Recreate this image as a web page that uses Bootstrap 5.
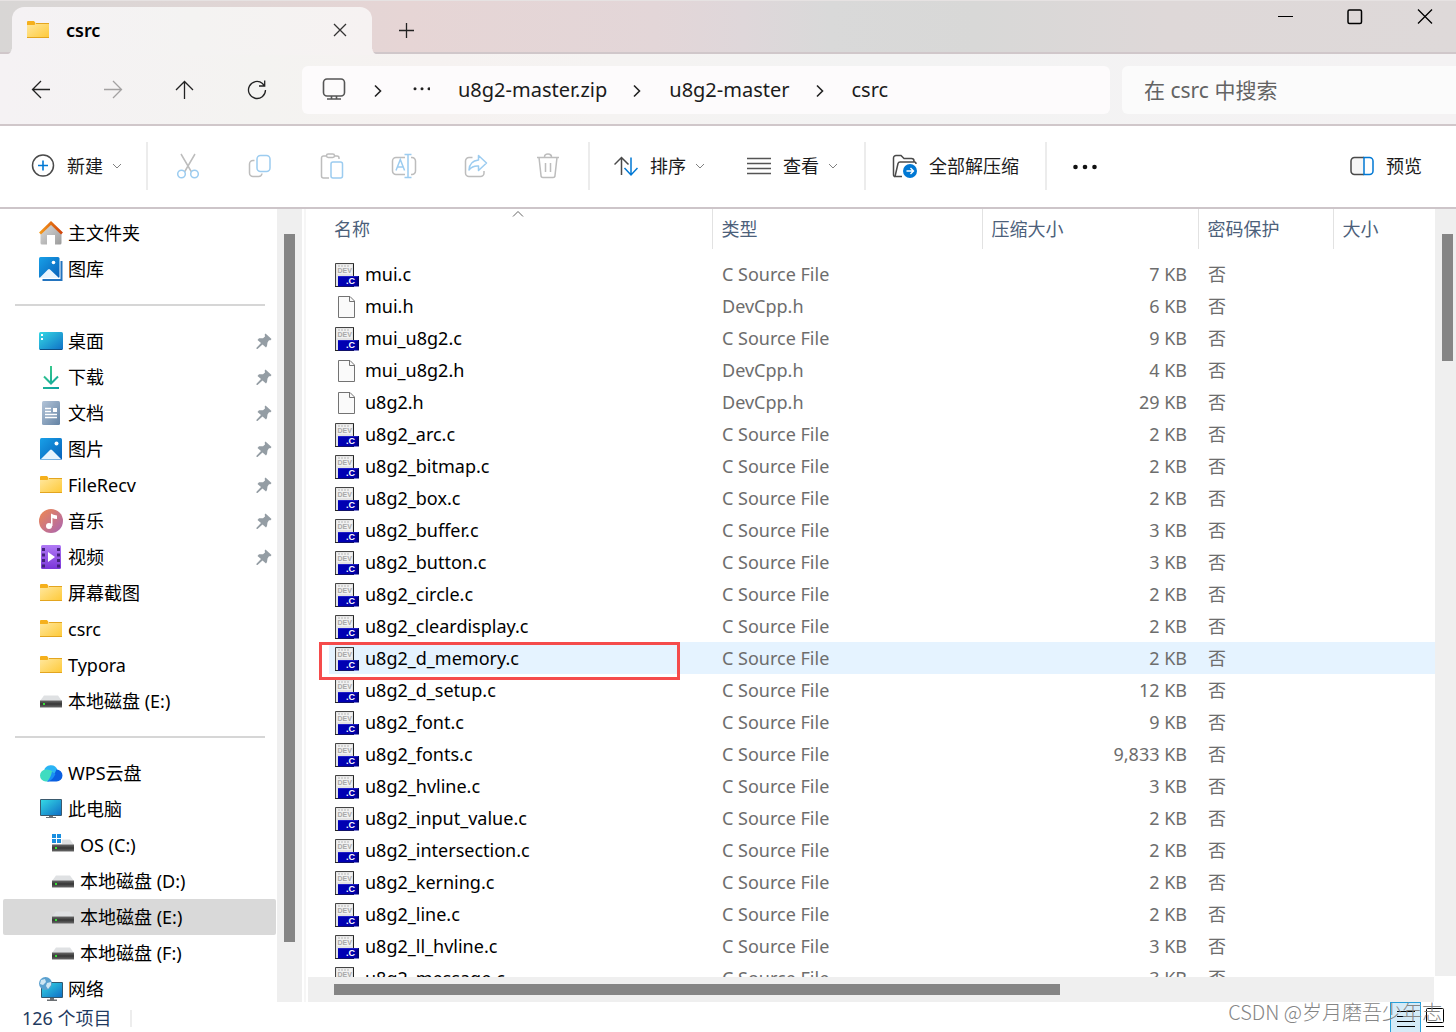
<!DOCTYPE html>
<html lang="zh-CN">
<head>
<meta charset="utf-8">
<meta name="viewport" content="width=device-width, initial-scale=1">
<title>csrc</title>
<link href="https://cdn.jsdelivr.net/npm/bootstrap@5.3.0/dist/css/bootstrap.min.css" rel="stylesheet">
<style>
  body { font-family: "Noto Sans", "Noto Sans CJK SC", sans-serif; font-size: 18px; line-height: 32px; color: #000; background: #fff; }
  svg { flex: none; display: block; }
  .win { height: 100vh; overflow: hidden; }
  .plain { border: 0; background: none; padding: 0; color: #1b1b1b; display: flex; align-items: center; }

  /* title strip */
  .strip { height: 54px; padding-left: 12px; border-top: 1px solid #e6e2e2; border-bottom: 2px solid #d0c7ca;
    background: linear-gradient(90deg, #d8d6d5 0, #e6d5d5 28%, #e3d6d8 45%, #dfd7da 51%, #d9d9d9 57%, #d8d8d7 67%, #ded8d8 80%, #ded9d9 100%); }
  .tab-on { width: 360px; height: 48px; margin-top: 6px; padding: 0 25px 2px 14px; border-radius: 12px 12px 0 0; position: relative;
    background: linear-gradient(90deg, #f5f2f4, #f4f3f2 50%, #f6f2f2); }
  .tab-on::before, .tab-on::after { content: ""; position: absolute; bottom: 0; width: 6px; height: 6px; }
  .tab-on::before { right: 100%; background: radial-gradient(circle at 0 0, transparent 5px, #f5f2f4 6px); }
  .tab-on::after { left: 100%; background: radial-gradient(circle at 100% 0, transparent 5px, #f6f2f2 6px); }
  .wbtn { width: 62px; height: 32px; justify-content: center; }
  .addtab { width: 68px; height: 100%; padding-top: 6px; }

  /* address row */
  .navrow { height: 72px; border-bottom: 2px solid #d0c7ca; padding: 2px 0 0 5px; background: linear-gradient(90deg, #f5f2f4 0, #f4f3f1 18%, #f6f2f1 30%, #f5f3f2 42%, #f3f3f3 60%, #f4f2f3 100%); }
  .nbtn { width: 72px; height: 48px; justify-content: center; }
  .addr, .find { height: 48px; background: #fdfbfc; font-size: 20px; }
  .addr { flex: 1 1 0; margin-left: 9px; border-radius: 6px; padding-left: 20px; }
  .addr a { color: #1b1b1b; text-decoration: none; }
  .crumb { margin: 2px 27px 0 25px; }
  .find { width: 334px; margin-left: 12px; border: 0; border-radius: 6px 0 0 6px; padding: 0 22px; background: #fbfbfb; font-size: 21px; }
  .find::placeholder { color: #636363; opacity: 1; }

  /* command bar */
  .cmd { height: 84px; border-bottom: 2px solid #cdc5c9; padding: 0 34px 0 31px; }
  .cmd .sep { width: 2px; height: 48px; background: #ececec; }
  .cmd .wide { margin: 0 26px; }
  .ibtn { width: 72px; height: 48px; justify-content: center; }
  .tgap { gap: 9px; }
  .tgap svg:first-child { margin-right: 3px; }
  .viewbtn { margin-left: 42px; }

  /* side tree */
  .tree { width: 277px; padding: 6px 1px 0 3px; overflow: hidden; }
  .tree a { height: 36px; padding-left: 36px; gap: 5px; color: #000; text-decoration: none; border-radius: 2px; }
  .tree a.sub { padding-left: 48px; }
  .tree a.here { background: #d9d9d9; }
  .tree .pin { margin-left: auto; margin-right: 4px; }
  .rule { height: 36px; padding: 17px 11px 0 12px; }
  .rule div { height: 2px; background: #d6d6d6; }

  /* scroll bars */
  .vbar { background: #efefef; }
  .vbar div { width: 11px; background: #858585; }
  .vleft { width: 25px; padding: 25px 0 60px 7px; }
  .vright { width: 21px; padding: 25px 0 0 7px; margin-bottom: 26px; }
  .vright div { height: 127px; }
  .hbar { height: 25px; margin: 0 1px 0 2px; padding: 7px 0 0 26px; background: #efefef; }
  .hbar div { height: 11px; width: 66%; background: #858585; }

  /* file list */
  .pane { border-left: 2px solid #f6f6f6; margin-left: 2px; }
  .listbox { padding-left: 23px; overflow: hidden; flex: 1 1 0; min-height: 0; }
  .files { table-layout: fixed; width: 100%; line-height: 32px; }
  .files th { height: 40px; padding: 0 0 0 9px; font-weight: 400; color: #4c607a; border-left: 1px solid #e2e2e2; position: relative; }
  .files th:first-child { border-left: 0; padding-left: 5px; }
  .files th svg { position: absolute; left: 50%; top: 1px; margin-left: -8px; }
  .files tbody::before { content: ""; display: block; height: 9px; }
  .files td { height: 32px; padding: 0 0 0 10px; color: #6d6d6d; white-space: nowrap; }
  .files td:first-child { padding-left: 6px; color: #000; position: relative; }
  .files td:nth-child(3) { text-align: right; padding-right: 11px; }
  .files td svg { display: inline-block; vertical-align: middle; margin-right: 6px; margin-top: -3px; }
  .files .hot td { background: #e5f3ff; }
  .redbox { position: absolute; left: -10px; top: 0; width: 361px; height: 38px; border: 3px solid #f54b4b; z-index: 2; }

  /* status line */
  .stat { height: 30px; padding: 2px 11px 0 22px; color: #1f3a5f; position: relative; overflow: hidden; }
  .stat .bar { width: 2px; height: 17px; margin-left: 18px; background: #ededed; }
  .von { width: 31px; height: 32px; border: 1px solid #26a0da; background: #d5ebf7; justify-content: center; }
  .wm { position: absolute; right: 14px; top: -6px; font-family: "Noto Sans CJK SC", sans-serif; font-weight: 300; font-size: 20px; color: #858585; }
</style>
</head>
<body>
<svg width="0" height="0" class="position-absolute" aria-hidden="true">
  <defs>
    <linearGradient id="gF" x1="0" y1="0" x2="1" y2="1"><stop offset="0" stop-color="#ffe8a0"/><stop offset="1" stop-color="#fec937"/></linearGradient>
    <linearGradient id="gB" x1="0" y1="0" x2="1" y2="1"><stop offset="0" stop-color="#18a0e8"/><stop offset="1" stop-color="#0860b8"/></linearGradient>
    <linearGradient id="gT" x1="0" y1="0" x2="1" y2="1"><stop offset="0" stop-color="#34d8e4"/><stop offset="1" stop-color="#0f6fc6"/></linearGradient>
    <linearGradient id="gO" x1="0" y1="0" x2="1" y2="0"><stop offset="0" stop-color="#f59a1b"/><stop offset="1" stop-color="#d0440c"/></linearGradient>
    <linearGradient id="gH" x1="0" y1="0" x2="1" y2="1"><stop offset="0" stop-color="#dedede"/><stop offset="1" stop-color="#9b9b9b"/></linearGradient>
    <linearGradient id="gM" x1="0" y1="0" x2="1" y2="1"><stop offset="0" stop-color="#f0894f"/><stop offset="1" stop-color="#a964b4"/></linearGradient>
    <linearGradient id="gV" x1="0" y1="0" x2="0" y2="1"><stop offset="0" stop-color="#b07af5"/><stop offset="1" stop-color="#7a35d8"/></linearGradient>
    <linearGradient id="gD" x1="0" y1="0" x2="1" y2="1"><stop offset="0" stop-color="#b3c4d8"/><stop offset="1" stop-color="#6483a4"/></linearGradient>
    <linearGradient id="gK" x1="0" y1="0" x2="0" y2="1"><stop offset="0" stop-color="#6a6a6a"/><stop offset=".5" stop-color="#363636"/><stop offset="1" stop-color="#6a6a6a"/></linearGradient>
    <linearGradient id="gG" gradientUnits="userSpaceOnUse" x1="4" y1="1" x2="20" y2="23"><stop offset="0" stop-color="#3fd088"/><stop offset="1" stop-color="#0aa0a0"/></linearGradient>
    <linearGradient id="gC" x1="0" y1="0" x2="1" y2="0"><stop offset="0" stop-color="#0000b8"/><stop offset=".85" stop-color="#0000a8"/><stop offset="1" stop-color="#000060"/></linearGradient>
    <symbol id="folder" viewBox="0 0 24 24"><path d="M1 5.500V4Q1 3 2 3h6l1.500 2v2.500H1z" fill="#f5b01c"/><path d="M1 7h7.500L10 5h13v15H1z" fill="url(#gF)"/><path d="M10 5.500h13M1 19.500h22" fill="none" stroke="#e3a51f"/></symbol>
    <symbol id="disk" viewBox="0 0 24 24"><path d="M1 12l4-5.500h14l4 5.500z" fill="#dfe1e3"/><path d="M1 11.500h22v7H1z" fill="url(#gK)"/><path d="M4 14h2v2H4z" fill="#35e035"/></symbol>
    <symbol id="pin" viewBox="0 0 16 16"><path d="M9.500.5l6 5.500-1 1.200-1.500 0-1.500 2.300-.5 3.500-1 1.500L6.500 11.500 1.500 16H.5v-1.200l4.500-4.800L1.500 7l1.500-1.800 4 0L9 3.500l-.3-2z" fill="#949da4"/></symbol>
    <symbol id="cfile" viewBox="0 0 24 24"><path d="M0 0h19v24H0z" fill="#e4e4e4"/><path d="M2 2h15v9H2z" fill="#f1f1f1"/><path d="M.5 24V.5H19" fill="none" stroke="#444"/><path d="M18.500 1v12M0 23.500h19" stroke="#222"/><path d="M3 3h11" stroke="#b5b5b5" stroke-dasharray="2 1"/><text x="2.500" y="9.500" font-family="Liberation Sans, sans-serif" font-size="7" font-weight="700" fill="#a8a8a8">DEV</text><path d="M3 13h21v10.500H3z" fill="url(#gC)"/><path d="M3 13.500h20" stroke="#2020c8"/><text x="11" y="21" font-family="Liberation Sans, sans-serif" font-weight="700" font-size="9" fill="#fff">.C</text></symbol>
    <symbol id="hfile" viewBox="0 0 24 24"><path d="M3.500 1.500h11.500l4.500 4.500v16.500h-16z" fill="#fafafa" stroke="#737373"/><path d="M14.500 1.500v5h5" fill="none" stroke="#737373"/></symbol>
    <symbol id="down" viewBox="0 0 10 10"><path d="M1 3l4 4 4-4" fill="none" stroke="#808080"/></symbol>
    <symbol id="next" viewBox="0 0 10 14"><path d="M2 1.500L7.500 7 2 12.500" fill="none" stroke="#222" stroke-width="1.600"/></symbol>
    <symbol id="photo" viewBox="0 0 24 24"><rect x="1" y="1" width="22" height="22" rx="1.500" fill="url(#gB)"/><path d="M1.500 22.500L11 13q1-1 2 0l9.500 9.500z" fill="#e8f4fd"/><circle cx="17.500" cy="6.500" r="2" fill="#fff"/></symbol>
  </defs>
</svg>

<div class="win d-flex flex-column">
  <header class="strip d-flex">
    <div class="tab-on d-flex align-items-center">
      <svg width="24" height="24"><use href="#folder"/></svg>
      <span class="fw-semibold ms-3 flex-grow-1">csrc</span>
      <button class="plain" aria-label="关闭标签页"><svg width="14" height="14" viewBox="0 0 14 14"><path d="M1 1l12 12M13 1L1 13" stroke="#333" stroke-width="1.300"/></svg></button>
    </div>
    <button class="plain addtab justify-content-center" aria-label="新标签页"><svg width="16" height="16" viewBox="0 0 16 16"><path d="M8.500 1v15M1 8.500h15" stroke="#222" stroke-width="1.300"/></svg></button>
    <div class="ms-auto d-flex gap-2">
      <button class="plain wbtn" aria-label="最小化"><svg width="16" height="16" viewBox="0 0 16 16"><path d="M1 7.500h15" stroke="#000"/></svg></button>
      <button class="plain wbtn" aria-label="最大化"><svg width="16" height="16" viewBox="0 0 16 16"><rect x="1" y="1" width="13.500" height="13.500" rx="1.500" fill="none" stroke="#000" stroke-width="1.500"/></svg></button>
      <button class="plain wbtn" aria-label="关闭"><svg width="16" height="16" viewBox="0 0 16 16"><path d="M1 .5l14 14M15 .5L1 14.500" stroke="#000" stroke-width="1.300"/></svg></button>
    </div>
  </header>

  <nav class="navrow d-flex align-items-center">
    <button class="plain nbtn" aria-label="后退"><svg width="20" height="20" viewBox="0 0 20 20" fill="none" stroke="#222" stroke-width="1.300"><path d="M19 9.500H1.500M10 1L1.500 9.500l8.500 8.500"/></svg></button>
    <button class="plain nbtn" aria-label="前进"><svg width="20" height="20" viewBox="0 0 20 20" fill="none" stroke="#a3a1a1" stroke-width="1.300"><path d="M1 9.500h17.500M10 1l8.500 8.500-8.500 8.500"/></svg></button>
    <button class="plain nbtn" aria-label="向上"><svg width="20" height="20" viewBox="0 0 20 20" fill="none" stroke="#222" stroke-width="1.300"><path d="M9.500 19V1.500M1 10l8.500-8.500 8.500 8.500"/></svg></button>
    <button class="plain nbtn" aria-label="刷新"><svg width="20" height="20" viewBox="0 0 20 20" fill="none" stroke="#222" stroke-width="1.300"><path d="M18.500 10A8.500 8.500 0 1 1 15.500 3.500L17.500 6M17.700.5V6H12"/></svg></button>
    <div class="addr d-flex align-items-center">
      <svg width="24" height="24" viewBox="0 0 24 24" fill="none" stroke="#555" stroke-width="1.600"><rect x="1.500" y="1" width="21" height="17" rx="3.500"/><path d="M9.500 18V21M14.500 18V21M5 21h14"/></svg>
      <svg class="crumb" width="14" height="14"><use href="#next" width="14" height="14"/></svg>
      <svg width="18" height="6" viewBox="0 0 18 6" fill="#222"><circle cx="3" cy="1.800" r="1.500"/><circle cx="10" cy="1.800" r="1.500"/><circle cx="17" cy="1.800" r="1.500"/></svg>
      <a href="#" class="ms-4 ps-1">u8g2-master.zip</a>
      <svg class="crumb" width="10" height="14"><use href="#next"/></svg>
      <a href="#">u8g2-master</a>
      <svg class="crumb" width="10" height="14"><use href="#next"/></svg>
      <a href="#">csrc</a>
    </div>
    <input class="find" type="search" aria-label="搜索" placeholder="在 csrc 中搜索">
  </nav>

  <div class="cmd d-flex align-items-center">
    <button class="plain tgap"><svg width="24" height="24" viewBox="0 0 24 24" fill="none"><circle cx="12" cy="11.500" r="10.500" stroke="#4a4a4a" stroke-width="1.500"/><path d="M12 6.500v10M7 11.500h10" stroke="#0078d4" stroke-width="1.600"/></svg>新建<svg width="10" height="10"><use href="#down"/></svg></button>
    <div class="sep ms-4 me-1"></div>
    <button class="plain ibtn" aria-label="剪切"><svg width="24" height="26" viewBox="0 0 24 26" fill="none" stroke-width="1.500"><path d="M5 1l10.500 18M19 1L8.500 19" stroke="#bdbdbd"/><circle cx="5.500" cy="21" r="3.800" stroke="#9cccf0"/><circle cx="18.500" cy="21" r="3.800" stroke="#9cccf0"/></svg></button>
    <button class="plain ibtn" aria-label="复制"><svg width="24" height="24" viewBox="0 0 24 24" fill="none" stroke-width="1.500"><path d="M6.500 6.500H5A3.500 3.500 0 0 0 1.500 10v9A3.500 3.500 0 0 0 5 22.500h5.500a3.500 3.500 0 0 0 3.500-3" stroke="#bdbdbd"/><rect x="9" y="1.500" width="13" height="16" rx="3.500" stroke="#9cccf0"/></svg></button>
    <button class="plain ibtn" aria-label="粘贴"><svg width="24" height="26" viewBox="0 0 24 26" fill="none" stroke-width="1.500"><path d="M6 3H3.500A2 2 0 0 0 1.500 5v18a2 2 0 0 0 2 2H9M14.500 3H17a2 2 0 0 1 2 2v1" stroke="#bdbdbd"/><rect x="6.500" y="1" width="8" height="3.500" rx="1.700" stroke="#bdbdbd"/><rect x="11" y="9" width="11.500" height="16" rx="2" stroke="#9cccf0"/></svg></button>
    <button class="plain ibtn" aria-label="重命名"><svg width="26" height="26" viewBox="0 0 26 26" fill="none" stroke-width="1.500"><path d="M14 4.500H5A3.500 3.500 0 0 0 1.500 8v10A3.500 3.500 0 0 0 5 21.500h9M20 4.500h1A3.500 3.500 0 0 1 24.500 8v10a3.500 3.500 0 0 1-3.500 3.500h-1" stroke="#bdbdbd"/><path d="M17 1.500v23M13.500 1.500h7M13.500 24.500h7M5 17.500l4.300-11 4.300 11M6.500 14h5.500" stroke="#9cccf0"/></svg></button>
    <button class="plain ibtn" aria-label="共享"><svg width="24" height="24" viewBox="0 0 24 24" fill="none" stroke-width="1.500" stroke-linejoin="round"><path d="M8.500 3.500H5A3.500 3.500 0 0 0 1.500 7v12A3.500 3.500 0 0 0 5 22.500h11.500A3.500 3.500 0 0 0 20 19v-2" stroke="#bdbdbd"/><path d="M14.500 1.500l8 7.500-8 7.500v-4.500q-6-.5-9.500 4Q5.500 7 14.500 6z" stroke="#9cccf0"/></svg></button>
    <button class="plain ibtn" aria-label="删除"><svg width="24" height="26" viewBox="0 0 24 26" fill="none" stroke="#bdbdbd" stroke-width="1.500"><path d="M1 4.500h22M8.500 4a3.500 3 0 0 1 7 0M3 4.500l2 18a2 2 0 0 0 2 2h10a2 2 0 0 0 2-2l2-18M9.500 10v9M14.500 10v9"/></svg></button>
    <div class="sep ms-1 me-4"></div>
    <button class="plain tgap"><svg width="24" height="24" viewBox="0 0 24 24" fill="none" stroke-width="1.500"><path d="M7.500 21V3.500M.5 10.500l7-7 7 7" stroke="#4a4a4a"/><path d="M17 3.500V21M10.500 14l6.500 7 6.500-7" stroke="#0078d4"/></svg>排序<svg width="10" height="10"><use href="#down"/></svg></button>
    <button class="plain tgap viewbtn"><svg width="24" height="24" viewBox="0 0 24 24"><path d="M0 4.500h24M0 9.500h24M0 14.500h24M0 19.500h24" stroke="#555" stroke-width="1.300"/></svg>查看<svg width="10" height="10"><use href="#down"/></svg></button>
    <div class="sep wide"></div>
    <button class="plain tgap"><svg width="25" height="24" viewBox="0 0 25 24" fill="none"><path d="M3 22.500q-1.500 0-1.500-2V4a2.500 2.500 0 0 1 2.500-2.500h5l3 3h7.500A2.500 2.500 0 0 1 22 7v1" stroke="#4a4a4a" stroke-width="1.500"/><path d="M10 22.500H3L6 9.500Q6.500 8 8 8h14.500q1.500 0 1.500 2" stroke="#4a4a4a" stroke-width="1.500"/><circle cx="18" cy="17" r="7" fill="#0078d4"/><path d="M14.500 17h7M18.500 14l3 3-3 3" stroke="#fff" stroke-width="1.400"/></svg>全部解压缩</button>
    <div class="sep wide"></div>
    <button class="plain" aria-label="更多"><svg width="26" height="8" viewBox="0 0 26 8" fill="#111"><circle cx="2.500" cy="5" r="2.300"/><circle cx="12" cy="5" r="2.300"/><circle cx="21.500" cy="5" r="2.300"/></svg></button>
    <button class="plain tgap ms-auto"><svg width="24" height="24" viewBox="0 0 24 24" fill="none" stroke-width="1.500"><path d="M14 3.500H4.500a3.500 3.500 0 0 0-3.500 3.500v10a3.500 3.500 0 0 0 3.500 3.500H14" fill="#f6f6f6" stroke="#4a4a4a"/><path d="M14 3.500h5.500A3.500 3.500 0 0 1 23 7v10a3.500 3.500 0 0 1-3.500 3.500H14z" stroke="#0078d4"/></svg>预览</button>
  </div>

  <main class="d-flex flex-grow-1 overflow-hidden">
    <nav class="tree flex-shrink-0">
      <a href="#" class="d-flex align-items-center"><svg width="24" height="24" viewBox="0 0 24 24"><path d="M1.500 11L12 2l10.500 9v11q0 1.500-1.500 1.500h-5V14H8v9.500H3q-1.500 0-1.500-1.500z" fill="url(#gH)"/><path d="M1 12.500L12 2l11 10.500" fill="none" stroke="url(#gO)" stroke-width="2.800"/></svg>主文件夹</a>
      <a href="#" class="d-flex align-items-center"><svg width="24" height="24" viewBox="0 0 24 24"><path d="M22.500 4v19H3.500" fill="none" stroke="#2374bf" stroke-width="2"/><rect x="0" y="0" width="20.500" height="21" rx="1.500" fill="url(#gB)"/><path d="M.5 21l8.500-8.500q1-1 2 0l9 8.500z" fill="#e8f4fd"/><circle cx="14.500" cy="5.500" r="1.800" fill="#fff"/></svg>图库</a>
      <div class="rule"><div></div></div>
      <a href="#" class="d-flex align-items-center"><svg width="24" height="24" viewBox="0 0 24 24"><rect y="3" width="24" height="18" rx="1.500" fill="url(#gT)"/><path d="M1 20.500h22" stroke="#0d4f86"/><path d="M2 5h2v2H2zM2 9h2v2H2z" fill="#fff"/></svg>桌面<svg class="pin" width="16" height="16"><use href="#pin"/></svg></a>
      <a href="#" class="d-flex align-items-center"><svg width="24" height="24" viewBox="0 0 24 24"><path d="M12 1v17M5 11.500l7 7 7-7M4 23h16" fill="none" stroke="url(#gG)" stroke-width="2"/></svg>下载<svg class="pin" width="16" height="16"><use href="#pin"/></svg></a>
      <a href="#" class="d-flex align-items-center"><svg width="24" height="24" viewBox="0 0 24 24"><rect x="3" width="18" height="24" rx="1.500" fill="url(#gD)"/><path d="M6 7.500h6M6 10.500h6M6 13.500h12M6 16.500h12" stroke="#fff" stroke-width="1.300"/><path d="M14 7h4v4h-4z" fill="#fff"/></svg>文档<svg class="pin" width="16" height="16"><use href="#pin"/></svg></a>
      <a href="#" class="d-flex align-items-center"><svg width="24" height="24"><use href="#photo"/></svg>图片<svg class="pin" width="16" height="16"><use href="#pin"/></svg></a>
      <a href="#" class="d-flex align-items-center"><svg width="24" height="24"><use href="#folder"/></svg>FileRecv<svg class="pin" width="16" height="16"><use href="#pin"/></svg></a>
      <a href="#" class="d-flex align-items-center"><svg width="24" height="24" viewBox="0 0 24 24"><circle cx="12" cy="12" r="12" fill="url(#gM)"/><circle cx="10" cy="17" r="3" fill="#fff"/><path d="M12 17V4.500q2 1.500 6 2V10q-3 0-4.500-1v8z" fill="#fff"/></svg>音乐<svg class="pin" width="16" height="16"><use href="#pin"/></svg></a>
      <a href="#" class="d-flex align-items-center"><svg width="24" height="24" viewBox="0 0 24 24"><rect x="2" width="20" height="24" rx="1.500" fill="url(#gV)"/><path d="M4.500 3v20M19.500 3v20" stroke="#43217c" stroke-width="3" stroke-dasharray="3 2.500"/><path d="M9 7l7 5-7 5z" fill="#fff"/></svg>视频<svg class="pin" width="16" height="16"><use href="#pin"/></svg></a>
      <a href="#" class="d-flex align-items-center"><svg width="24" height="24"><use href="#folder"/></svg>屏幕截图</a>
      <a href="#" class="d-flex align-items-center"><svg width="24" height="24"><use href="#folder"/></svg>csrc</a>
      <a href="#" class="d-flex align-items-center"><svg width="24" height="24"><use href="#folder"/></svg>Typora</a>
      <a href="#" class="d-flex align-items-center"><svg width="24" height="24"><use href="#disk"/></svg>本地磁盘 (E:)</a>
      <div class="rule"><div></div></div>
      <a href="#" class="d-flex align-items-center"><svg width="24" height="24" viewBox="0 0 24 24"><path d="M5 10a7 7 0 0 1 13.500-1l-5 8z" fill="#2ab4f5"/><path d="M17.500 8.500a6 6 0 0 1 0 12H8Q14 17 17.500 8.500z" fill="#0a5fe0"/><path d="M7 8.500q4-.5 8 3-3 6-7 9H7a6 6 0 0 1 0-12z" fill="#3fdcc0"/><path d="M13 10.500l3.500 2.500q-2.500 5.500-7 7.500H8q4-4 5-10z" fill="#1a90f5"/></svg>WPS云盘</a>
      <a href="#" class="d-flex align-items-center"><svg width="24" height="24" viewBox="0 0 24 24"><rect x="1" y="2" width="22" height="17" rx="1" fill="#3a5a6e"/><rect x="2" y="3" width="20" height="15" fill="url(#gT)"/><path d="M10 19h4v1h3v1H7v-1h3z" fill="#6b6f73"/></svg>此电脑</a>
      <a href="#" class="sub d-flex align-items-center"><svg width="24" height="24" viewBox="0 0 24 24"><use href="#disk"/><path d="M0 0h11v11H0z" fill="#fff"/><path d="M1 1h4v4H1zM6 1h4v4H6zM1 6h4v4H1zM6 6h4v4H6z" fill="#1a8fe0"/></svg>OS (C:)</a>
      <a href="#" class="sub d-flex align-items-center"><svg width="24" height="24"><use href="#disk"/></svg>本地磁盘 (D:)</a>
      <a href="#" class="sub here d-flex align-items-center"><svg width="24" height="24"><use href="#disk"/></svg>本地磁盘 (E:)</a>
      <a href="#" class="sub d-flex align-items-center"><svg width="24" height="24"><use href="#disk"/></svg>本地磁盘 (F:)</a>
      <a href="#" class="d-flex align-items-center"><svg width="24" height="24" viewBox="0 0 24 24"><rect x="2" y="5" width="22" height="16" rx="1" fill="#31586f"/><rect x="3" y="6" width="20" height="14" fill="url(#gT)"/><path d="M11 21h4v1.500h3V24H8v-1.500h3z" fill="#6b6f73"/><circle cx="6.500" cy="6.500" r="6.500" fill="#5aa0cf"/><path d="M2 3l4-1 1 3-3 3-3-1zM8 6l4-1v3l-3 4-2-3z" fill="#cfe6f3"/></svg>网络</a>
    </nav>
    <div class="vbar vleft d-flex flex-shrink-0"><div class="h-100"></div></div>

    <section class="pane d-flex flex-grow-1 overflow-hidden">
      <div class="d-flex flex-column flex-grow-1 overflow-hidden">
        <div class="listbox">
          <table class="files">
            <colgroup><col style="width:383px"><col style="width:270px"><col style="width:216px"><col style="width:135px"><col></colgroup>
            <thead><tr><th scope="col">名称<svg width="12" height="8" viewBox="0 0 12 8"><path d="M1 6.500L6 1.500l5 5" fill="none" stroke="#666"/></svg></th><th scope="col">类型</th><th scope="col">压缩大小</th><th scope="col">密码保护</th><th scope="col">大小</th></tr></thead>
            <tbody>
              <tr><td><svg width="24" height="24"><use href="#cfile"/></svg>mui.c</td><td>C Source File</td><td>7 KB</td><td>否</td><td></td></tr>
              <tr><td><svg width="24" height="24"><use href="#hfile"/></svg>mui.h</td><td>DevCpp.h</td><td>6 KB</td><td>否</td><td></td></tr>
              <tr><td><svg width="24" height="24"><use href="#cfile"/></svg>mui_u8g2.c</td><td>C Source File</td><td>9 KB</td><td>否</td><td></td></tr>
              <tr><td><svg width="24" height="24"><use href="#hfile"/></svg>mui_u8g2.h</td><td>DevCpp.h</td><td>4 KB</td><td>否</td><td></td></tr>
              <tr><td><svg width="24" height="24"><use href="#hfile"/></svg>u8g2.h</td><td>DevCpp.h</td><td>29 KB</td><td>否</td><td></td></tr>
              <tr><td><svg width="24" height="24"><use href="#cfile"/></svg>u8g2_arc.c</td><td>C Source File</td><td>2 KB</td><td>否</td><td></td></tr>
              <tr><td><svg width="24" height="24"><use href="#cfile"/></svg>u8g2_bitmap.c</td><td>C Source File</td><td>2 KB</td><td>否</td><td></td></tr>
              <tr><td><svg width="24" height="24"><use href="#cfile"/></svg>u8g2_box.c</td><td>C Source File</td><td>2 KB</td><td>否</td><td></td></tr>
              <tr><td><svg width="24" height="24"><use href="#cfile"/></svg>u8g2_buffer.c</td><td>C Source File</td><td>3 KB</td><td>否</td><td></td></tr>
              <tr><td><svg width="24" height="24"><use href="#cfile"/></svg>u8g2_button.c</td><td>C Source File</td><td>3 KB</td><td>否</td><td></td></tr>
              <tr><td><svg width="24" height="24"><use href="#cfile"/></svg>u8g2_circle.c</td><td>C Source File</td><td>2 KB</td><td>否</td><td></td></tr>
              <tr><td><svg width="24" height="24"><use href="#cfile"/></svg>u8g2_cleardisplay.c</td><td>C Source File</td><td>2 KB</td><td>否</td><td></td></tr>
              <tr class="hot"><td><svg width="24" height="24"><use href="#cfile"/></svg>u8g2_d_memory.c<span class="redbox"></span></td><td>C Source File</td><td>2 KB</td><td>否</td><td></td></tr>
              <tr><td><svg width="24" height="24"><use href="#cfile"/></svg>u8g2_d_setup.c</td><td>C Source File</td><td>12 KB</td><td>否</td><td></td></tr>
              <tr><td><svg width="24" height="24"><use href="#cfile"/></svg>u8g2_font.c</td><td>C Source File</td><td>9 KB</td><td>否</td><td></td></tr>
              <tr><td><svg width="24" height="24"><use href="#cfile"/></svg>u8g2_fonts.c</td><td>C Source File</td><td>9,833 KB</td><td>否</td><td></td></tr>
              <tr><td><svg width="24" height="24"><use href="#cfile"/></svg>u8g2_hvline.c</td><td>C Source File</td><td>3 KB</td><td>否</td><td></td></tr>
              <tr><td><svg width="24" height="24"><use href="#cfile"/></svg>u8g2_input_value.c</td><td>C Source File</td><td>2 KB</td><td>否</td><td></td></tr>
              <tr><td><svg width="24" height="24"><use href="#cfile"/></svg>u8g2_intersection.c</td><td>C Source File</td><td>2 KB</td><td>否</td><td></td></tr>
              <tr><td><svg width="24" height="24"><use href="#cfile"/></svg>u8g2_kerning.c</td><td>C Source File</td><td>2 KB</td><td>否</td><td></td></tr>
              <tr><td><svg width="24" height="24"><use href="#cfile"/></svg>u8g2_line.c</td><td>C Source File</td><td>2 KB</td><td>否</td><td></td></tr>
              <tr><td><svg width="24" height="24"><use href="#cfile"/></svg>u8g2_ll_hvline.c</td><td>C Source File</td><td>3 KB</td><td>否</td><td></td></tr>
              <tr><td><svg width="24" height="24"><use href="#cfile"/></svg>u8g2_message.c</td><td>C Source File</td><td>3 KB</td><td>否</td><td></td></tr>
            </tbody>
          </table>
        </div>
        <div class="hbar flex-shrink-0"><div></div></div>
      </div>
      <div class="vbar vright flex-shrink-0"><div></div></div>
    </section>
  </main>

  <footer class="stat d-flex align-items-center flex-shrink-0">
    <span>126 个项目</span><span class="bar"></span>
    <button class="plain von ms-auto" aria-label="详细信息"><svg width="18" height="20" viewBox="0 0 18 20"><path d="M0 3.500h18M0 8.500h18M0 13.500h18M0 18.500h18" stroke="#000"/></svg></button>
    <button class="plain ms-1" aria-label="大图标"><svg width="20" height="20" viewBox="0 0 20 20" fill="none" stroke="#000"><rect x="1.500" y=".5" width="17" height="14" rx="1"/><path d="M1 18.500h18"/></svg></button>
    <span class="wm">CSDN @岁月磨吾少年志</span>
  </footer>
</div>
<script src="https://cdn.jsdelivr.net/npm/bootstrap@5.3.0/dist/js/bootstrap.bundle.min.js"></script>
</body>
</html>
